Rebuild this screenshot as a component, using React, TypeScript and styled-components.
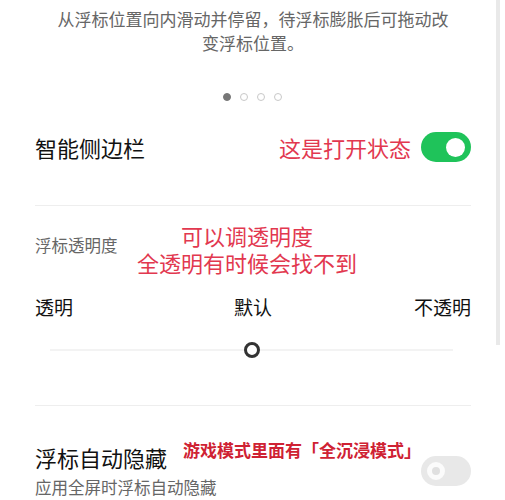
import React from 'react';
import styled, {createGlobalStyle} from 'styled-components';

const GlobalStyle = createGlobalStyle`
  body {
    margin: 0;
    background: #ffffff;
    font-family: "Noto Sans CJK SC", "Noto Sans", sans-serif;
  }
`;

const Page = styled.div`
  position: relative;
  width: 505px;
  height: 500px;
  overflow: hidden;
  padding: 0 34px 0 35px;
  box-sizing: border-box;
  background: #fff;
`;

const ScrollBar = styled.div`
  position: absolute;
  top: 0;
  right: 5px;
  width: 4px;
  height: 345px;
  background: #e9e9e9;
`;

const Description = styled.p`
  margin: 0;
  padding-top: 7px;
  font-size: 17px;
  line-height: 24px;
  color: #666;
  text-align: center;
`;

const Pager = styled.div`
  display: flex;
  justify-content: center;
  gap: 9px;
  margin-top: 38px;
  height: 8px;
  padding-right: 2px;
`;

const Dot = styled.span<{$active?: boolean}>`
  width: 8px;
  height: 8px;
  border-radius: 50%;
  box-sizing: border-box;
  background: ${(p) => (p.$active ? '#777' : '#fff')};
  border: 1px solid ${(p) => (p.$active ? '#777' : '#c8c8c8')};
`;

const SwitchRow = styled.div`
  display: flex;
  align-items: center;
  justify-content: space-between;
  margin-top: 16px;
  height: 60px;
`;

const Title = styled.div`
  font-size: 22px;
  line-height: 30px;
  color: #111;
`;

const RowEnd = styled.div`
  display: flex;
  align-items: center;
  gap: 10px;
`;

const Note = styled.span`
  font-size: 22px;
  line-height: 30px;
  color: #e2384f;
`;

const Toggle = styled.span<{$on?: boolean}>`
  position: relative;
  display: flex;
  align-items: center;
  justify-content: ${(p) => (p.$on ? 'flex-end' : 'flex-start')};
  width: 50px;
  height: 30px;
  padding: 0 6px;
  box-sizing: border-box;
  border-radius: 15px;
  background: ${(p) => (p.$on ? '#1fc35a' : '#e8e8e8')};
`;

const Knob = styled.span<{$on?: boolean}>`
  width: ${(p) => (p.$on ? 19 : 18)}px;
  height: ${(p) => (p.$on ? 19 : 18)}px;
  border-radius: 50%;
  box-sizing: border-box;
  background: ${(p) => (p.$on ? '#fff' : '#e0e0e0')};
  border: ${(p) => (p.$on ? 'none' : '5px solid #fbfbfb')};
`;

const Divider = styled.div<{$top: number}>`
  margin-top: ${(p) => p.$top}px;
  height: 1px;
  background: #eeeeee;
`;

const SectionLabel = styled.div`
  position: relative;
  margin-top: 27px;
  font-size: 16.5px;
  line-height: 24px;
  color: #666;
`;

const OverlayNote = styled.div<{$left: number; $top: number; $width?: number; $bold?: boolean}>`
  position: absolute;
  left: ${(p) => p.$left}px;
  top: ${(p) => p.$top}px;
  width: ${(p) => (p.$width ? `${p.$width}px` : 'auto')};
  white-space: nowrap;
  text-align: center;
  font-size: ${(p) => (p.$bold ? 17 : 22)}px;
  line-height: ${(p) => (p.$bold ? 24 : 27)}px;
  font-weight: ${(p) => (p.$bold ? 700 : 400)};
  color: ${(p) => (p.$bold ? '#cf2233' : '#e2384f')};
`;

const LevelRow = styled.div`
  display: grid;
  grid-template-columns: 1fr auto 1fr;
  margin-top: 37px;
  font-size: 19px;
  line-height: 26px;
  color: #111;
`;

const Level = styled.span<{$align: 'left' | 'center' | 'right'}>`
  text-align: ${(p) => p.$align};
`;

const Slider = styled.div`
  position: relative;
  display: flex;
  align-items: center;
  justify-content: center;
  margin-top: 15px;
  height: 30px;
  padding-right: 2px;

  &::before {
    content: '';
    position: absolute;
    left: 15px;
    right: 18px;
    top: 14px;
    height: 2px;
    background: #f3f3f3;
  }
`;

const Thumb = styled.span`
  position: relative;
  width: 16px;
  height: 16px;
  border-radius: 50%;
  box-sizing: border-box;
  border: 3px solid #333;
  background: #fff;
`;

const HideRow = styled.div`
  position: relative;
  display: flex;
  align-items: center;
  justify-content: space-between;
  margin-top: 36px;
`;

const HideText = styled.div`
  display: flex;
  flex-direction: column;
`;

const Sub = styled.div`
  margin-top: 2px;
  font-size: 16.5px;
  line-height: 26px;
  color: #666;
`;

const App = () => {
  return (
    <Page>
      <GlobalStyle />
      <Description>
        从浮标位置向内滑动并停留，待浮标膨胀后可拖动改
        <br />
        变浮标位置。
      </Description>
      <Pager>
        <Dot $active />
        <Dot />
        <Dot />
        <Dot />
      </Pager>
      <SwitchRow>
        <Title>智能侧边栏</Title>
        <RowEnd>
          <Note>这是打开状态</Note>
          <Toggle $on>
            <Knob $on />
          </Toggle>
        </RowEnd>
      </SwitchRow>
      <Divider $top={28} />
      <SectionLabel>
        浮标透明度
        <OverlayNote $left={59} $top={-11} $width={306}>
          可以调透明度
          <br />
          全透明有时候会找不到
        </OverlayNote>
      </SectionLabel>
      <LevelRow>
        <Level $align="left">透明</Level>
        <Level $align="center">默认</Level>
        <Level $align="right">不透明</Level>
      </LevelRow>
      <Slider>
        <Thumb />
      </Slider>
      <Divider $top={40} />
      <HideRow>
        <HideText>
          <Title>浮标自动隐藏</Title>
          <Sub>应用全屏时浮标自动隐藏</Sub>
        </HideText>
        <Toggle>
          <Knob />
        </Toggle>
        <OverlayNote $left={148} $top={-4} $bold>
          游戏模式里面有「全沉浸模式」
        </OverlayNote>
      </HideRow>
      <ScrollBar />
    </Page>
  );
};

export default App;
